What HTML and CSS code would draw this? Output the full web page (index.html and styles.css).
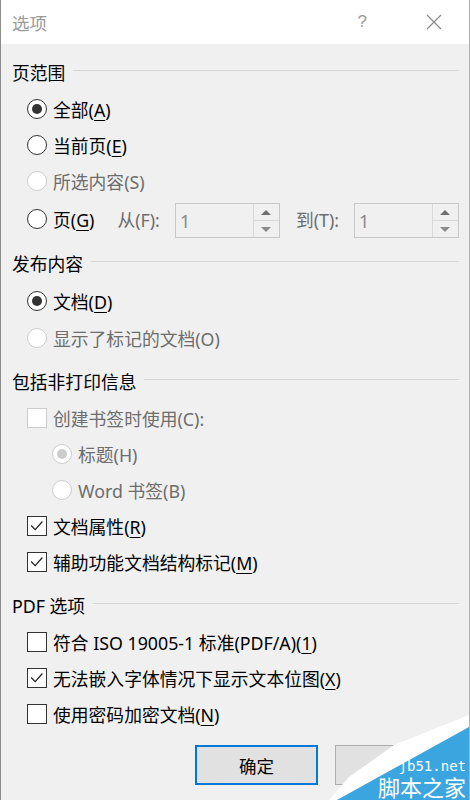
FILE: index.html
```html
<!DOCTYPE html>
<html lang="zh-CN">
<head>
<meta charset="utf-8">
<title>选项</title>
<link rel="stylesheet" href="styles.css">
</head>
<body>
<div class="window">
  <div class="titlebar">
    <span class="title">选项</span>
    <span class="help">?</span>
    <svg class="close" width="16" height="16" viewBox="0 0 16 16"><path d="M1 1L15 15M15 1L1 15" stroke="#8a8a8a" stroke-width="1.2" fill="none"/></svg>
  </div>
  <div class="content">
    <section class="group first">
      <div class="ghead"><span>页范围</span><i class="rule"></i></div>
      <div class="row"><span class="radio on"></span><span class="lbl">全部(<u>A</u>)</span></div>
      <div class="row"><span class="radio"></span><span class="lbl">当前页(<u>E</u>)</span></div>
      <div class="row dis"><span class="radio"></span><span class="lbl">所选内容(S)</span></div>
      <div class="row pagerow">
        <span class="radio"></span><span class="lbl">页(<u>G</u>)</span>
        <span class="from">从(F):</span>
        <span class="spin"><span class="val">1</span><span class="arrows"><span class="up"></span><span class="down"></span></span></span>
        <span class="to">到(T):</span>
        <span class="spin"><span class="val">1</span><span class="arrows"><span class="up"></span><span class="down"></span></span></span>
      </div>
    </section>
    <section class="group g2">
      <div class="ghead"><span>发布内容</span><i class="rule"></i></div>
      <div class="row"><span class="radio on"></span><span class="lbl">文档(<u>D</u>)</span></div>
      <div class="row dis"><span class="radio"></span><span class="lbl">显示了标记的文档(O)</span></div>
    </section>
    <section class="group">
      <div class="ghead"><span>包括非打印信息</span><i class="rule"></i></div>
      <div class="row dis"><span class="check"></span><span class="lbl">创建书签时使用(C):</span></div>
      <div class="row dis indent"><span class="radio on"></span><span class="lbl">标题(H)</span></div>
      <div class="row dis indent"><span class="radio"></span><span class="lbl">Word 书签(B)</span></div>
      <div class="row"><span class="check on"><svg viewBox="0 0 20 20" width="18" height="18"><path d="M3.5 9.5L8 14L16 5" stroke="#222" stroke-width="1.4" fill="none"/></svg></span><span class="lbl">文档属性(<u>R</u>)</span></div>
      <div class="row"><span class="check on"><svg viewBox="0 0 20 20" width="18" height="18"><path d="M3.5 9.5L8 14L16 5" stroke="#222" stroke-width="1.4" fill="none"/></svg></span><span class="lbl">辅助功能文档结构标记(<u>M</u>)</span></div>
    </section>
    <section class="group">
      <div class="ghead"><span>PDF 选项</span><i class="rule"></i></div>
      <div class="row"><span class="check"></span><span class="lbl">符合 ISO 19005-1 标准(PDF/A)(<u>1</u>)</span></div>
      <div class="row"><span class="check on"><svg viewBox="0 0 20 20" width="18" height="18"><path d="M3.5 9.5L8 14L16 5" stroke="#222" stroke-width="1.4" fill="none"/></svg></span><span class="lbl">无法嵌入字体情况下显示文本位图(<u>X</u>)</span></div>
      <div class="row"><span class="check"></span><span class="lbl">使用密码加密文档(<u>N</u>)</span></div>
    </section>
    <div class="buttons">
      <button class="btn primary">确定</button>
      <button class="btn"></button>
    </div>
  </div>
  <div class="watermark">
    <svg class="wm-shape" width="140" height="85" viewBox="0 0 140 85">
      <polygon points="140,0 65,30 20,62 0,85 8,85 140,12" fill="#ffffff"/>
      <polygon points="140,12 8,85 140,85" fill="#3ba5df"/>
    </svg>
    <span class="wm-url">jb51.net</span>
    <span class="wm-name">脚本之家</span>
  </div>
</div>
</body>
</html>
```
FILE: styles.css
```css
* { box-sizing: border-box; }
html, body { margin: 0; padding: 0; }
body {
  width: 470px;
  height: 800px;
  overflow: hidden;
  background: #f0f0f0;
  font-family: "Noto Sans", "Noto Sans CJK SC", sans-serif;
  font-size: 17.8px;
  color: #000;
}
.window {
  position: relative;
  width: 470px;
  height: 800px;
  border-left: 1px solid #8c8c8c;
  border-right: 1px solid #b0b0b0;
  background: #f0f0f0;
}
.titlebar {
  height: 44px;
  background: #fff;
  display: flex;
  align-items: center;
  padding-left: 11px;
}
.title {
  color: #9a9a9a;
  font-size: 17.5px;
  flex: 1;
}
.help {
  color: #9a9a9a;
  font-size: 17px;
  font-family: "Liberation Sans", sans-serif;
  margin-right: 59px;
}
.close { margin-right: 27px; }
.content {
  padding: 0 10px 0 11px;
}
.group { margin-top: 13px; }
.group.first { margin-top: 16px; }
.ghead {
  height: 24px;
  display: flex;
  align-items: center;
  margin-bottom: 7px;
  white-space: nowrap;
}
.ghead .rule {
  flex: 1;
  height: 1px;
  background: #d6d6d6;
  margin-left: 8px;
  margin-top: -4px;
}
.row {
  height: 36px;
  display: flex;
  align-items: center;
  padding-left: 15px;
  white-space: nowrap;
}
.g2 .row { height: 37px; }
.row.indent { padding-left: 40px; }
.row.pagerow { height: 39px; }
.lbl { margin-left: 6px; }
.lbl u { text-decoration-thickness: 1px; text-underline-offset: 3px; }
.dis .lbl { color: #6d6d6d; }
.radio {
  width: 20px;
  height: 20px;
  border-radius: 50%;
  border: 1.5px solid #333;
  background: #fff;
  display: flex;
  align-items: center;
  justify-content: center;
  flex: none;
}
.radio.on::after {
  content: "";
  width: 10px;
  height: 10px;
  border-radius: 50%;
  background: #333;
}
.dis .radio { border-color: #cccccc; }
.dis .radio.on::after { background: #cccccc; }
.check {
  width: 20px;
  height: 20px;
  border: 1.5px solid #333;
  background: #fff;
  display: flex;
  align-items: center;
  justify-content: center;
  flex: none;
}
.dis .check { border-color: #cccccc; }
.from { color: #6d6d6d; margin-left: 23px; flex: none; }
.to { color: #6d6d6d; margin-left: 16px; flex: none; }
.spin {
  width: 105px;
  height: 35px;
  border: 1px solid #c8c8c8;
  margin-left: 15px;
  margin-top: 4px;
  display: flex;
  flex: none;
}
.spin .val {
  flex: 1;
  color: #8a8a8a;
  font-size: 18px;
  padding-left: 4px;
  display: flex;
  align-items: center;
}
.arrows {
  width: 26px;
  border-left: 1px solid #d8d8d8;
  display: flex;
  flex-direction: column;
}
.arrows .up, .arrows .down {
  flex: 1;
  display: flex;
  align-items: center;
  justify-content: center;
}
.arrows .up { border-bottom: 1px solid #d8d8d8; }
.arrows .up::after {
  content: "";
  border-left: 5px solid transparent;
  border-right: 5px solid transparent;
  border-bottom: 5px solid #6f6f6f;
}
.arrows .down::after {
  content: "";
  border-left: 5px solid transparent;
  border-right: 5px solid transparent;
  border-top: 5px solid #8a8a8a;
}
.buttons {
  margin-top: 13px;
  display: flex;
  padding-left: 183px;
  gap: 17px;
}
.btn {
  width: 123px;
  height: 40px;
  background: #e1e1e1;
  border: 1px solid #adadad;
  font-family: "Noto Sans", "Noto Sans CJK SC", sans-serif;
  font-size: 17.5px;
  color: #000;
  padding: 0;
  flex: none;
}
.btn.primary { border: 2px solid #0078d7; }
.watermark {
  position: absolute;
  right: 0;
  bottom: 0;
  width: 140px;
  height: 85px;
}
.wm-shape { position: absolute; left: 0; top: 0; display: block; }
.wm-url {
  position: absolute;
  right: 3px;
  top: 45px;
  color: #fff;
  font-family: "DejaVu Sans Mono", monospace;
  font-size: 14px;
  line-height: 13px;
}
.wm-name {
  position: absolute;
  right: 3px;
  top: 60px;
  color: #fff;
  font-family: "Noto Sans CJK SC", sans-serif;
  font-size: 22px;
  line-height: 22px;
}
```
